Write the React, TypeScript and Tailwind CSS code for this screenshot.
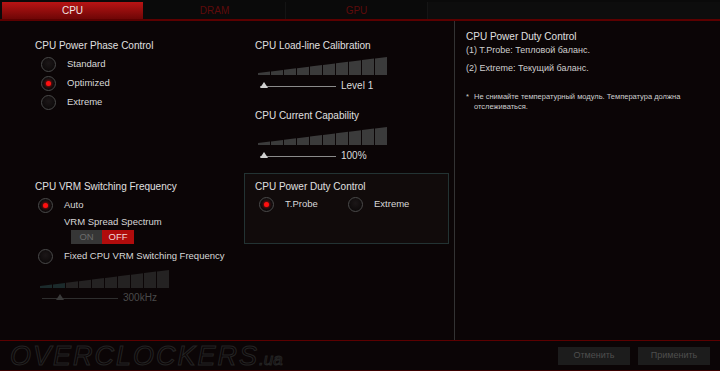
import React from 'react';

const font = "font-['Liberation_Sans',Arial,sans-serif]";

function Radio({ on }: { on?: boolean }) {
    return (
        <span className="flex h-[15px] w-[15px] shrink-0 items-center justify-center rounded-full border border-[#4a4a4a] bg-[radial-gradient(circle_at_50%_40%,#1c1718,#080505)]">
            {on && <span className="h-[5px] w-[5px] rounded-full bg-[#ff1010] shadow-[0_0_3px_#ff0000]" />}
        </span>
    );
}

function Bars({ faded }: { faded?: boolean }) {
    const cols = Array.from({ length: 10 }, (_, i) => i);
    const w = 129;
    const h = 18;
    const top = (x: number) => h - (2 + (x / w) * 16);
    return (
        <svg width={w} height={h} viewBox={`0 0 ${w} ${h}`} className="block">
            {cols.map((i) => {
                const x0 = i * 13;
                const x1 = x0 + 12;
                const fill = faded ? (i < 2 ? '#1b2a2b' : '#242222') : '#3b3b3b';
                return (
                    <polygon
                        key={i}
                        points={`${x0},${h} ${x0},${top(x0)} ${x1},${top(x1)} ${x1},${h}`}
                        fill={fill}
                    />
                );
            })}
        </svg>
    );
}

function Slider({ label, faded }: { label: string; faded?: boolean }) {
    return (
        <div className="flex h-[15px] items-center">
            <div className="relative h-[8px] w-[80px]">
                <div className={`absolute left-[2px] right-[2px] top-[4px] h-px ${faded ? 'bg-[#2e2e2e]' : 'bg-[#8a8a8a]'}`} />
                <svg className={`absolute top-0 ${faded ? 'left-[16px]' : 'left-[2px]'}`} width="8" height="6" viewBox="0 0 8 6">
                    <polygon points="4,0 8,6 0,6" fill={faded ? '#3a3a3a' : '#d0d0d0'} />
                </svg>
            </div>
            <span className={`ml-[3px] text-[10px] ${faded ? 'text-[#4a4a4a]' : 'text-[#dcdcdc]'}`}>{label}</span>
        </div>
    );
}

function Option({ on, label }: { on?: boolean; label: string }) {
    return (
        <div className="flex h-[19px] items-center">
            <Radio on={on} />
            <span className="ml-[11px] text-[9.5px] text-[#d8d8d8]">{label}</span>
        </div>
    );
}

export default function App() {
    return (
        <div className={`flex h-[371px] w-[720px] flex-col overflow-hidden bg-[#0b0506] ${font}`}>
            {/* tabs */}
            <div className="flex h-[19px] shrink-0 bg-[#0a0a0a] pt-[2px]">
                <div className="ml-[2px] flex w-[141px] items-center justify-center bg-[linear-gradient(#b81414,#6e0606)] text-[10px] text-[#f0e6e6]">CPU</div>
                <div className="ml-px flex w-[142px] items-center justify-center border-r border-[#141414] text-[10px] text-[#5e0b0b]">DRAM</div>
                <div className="flex w-[142px] items-center justify-center border-r border-[#151515] text-[10px] text-[#5e0b0b]">GPU</div>
                <div className="flex-1 bg-[#0d0d0d]" />
            </div>
            <div className="h-[2px] shrink-0 bg-[#5c0000]" />

            {/* main */}
            <div className="flex flex-1">
                <div className="flex w-[455px] border-r border-[#333]">
                    {/* column A */}
                    <div className="flex w-[244px] flex-col pl-[35px] pt-[17px]">
                        <div className="h-[15px] text-[10px] text-[#e0e0e0]">CPU Power Phase Control</div>
                        <div className="ml-[6px] mt-[2px] flex flex-col">
                            <Option label="Standard" />
                            <Option on label="Optimized" />
                            <Option label="Extreme" />
                        </div>

                        <div className="mt-[67px] h-[15px] text-[10px] text-[#e0e0e0]">CPU VRM Switching Frequency</div>
                        <div className="ml-[3px] mt-[2px] flex h-[19px] items-center">
                            <Radio on />
                            <span className="ml-[11px] text-[9.5px] text-[#d8d8d8]">Auto</span>
                        </div>
                        <div className="ml-[29px] h-[14px] text-[9.5px] leading-[14px] text-[#d8d8d8]">VRM Spread Spectrum</div>
                        <div className="ml-[36px] mt-[1px] flex h-[14px] w-[63px] text-[9.5px]">
                            <div className="flex w-[31px] items-center justify-center bg-[#363636] text-[#6c6c6c]">ON</div>
                            <div className="flex flex-1 items-center justify-center bg-[#b00c0c] text-[#f0dada]">OFF</div>
                        </div>
                        <div className="ml-[3px] mt-[3px] flex h-[19px] items-center">
                            <Radio />
                            <span className="ml-[11px] whitespace-nowrap text-[9.5px] text-[#d8d8d8]">Fixed CPU VRM Switching Frequency</span>
                        </div>
                        <div className="ml-[5px] mt-[4px]">
                            <Bars faded />
                        </div>
                        <div className="ml-[5px] mt-[2px]">
                            <Slider faded label="300kHz" />
                        </div>
                    </div>

                    {/* column B */}
                    <div className="flex flex-1 flex-col pr-[5px] pt-[17px]">
                        <div className="h-[15px] pl-[11px] text-[10px] text-[#e0e0e0]">CPU Load-line Calibration</div>
                        <div className="ml-[14px] mt-[4px]"><Bars /></div>
                        <div className="ml-[14px] mt-[3px]"><Slider label="Level 1" /></div>

                        <div className="mt-[15px] h-[15px] pl-[11px] text-[10px] text-[#e0e0e0]">CPU Current Capability</div>
                        <div className="ml-[14px] mt-[4px]"><Bars /></div>
                        <div className="ml-[14px] mt-[3px]"><Slider label="100%" /></div>

                        <div className="mt-[10px] h-[71px] border border-[#233333] bg-[#110b0b] pl-[10px] pt-[5px]">
                            <div className="h-[15px] text-[10px] text-[#e0e0e0]">CPU Power Duty Control</div>
                            <div className="ml-[4px] mt-px flex h-[19px] items-center">
                                <Radio on />
                                <span className="ml-[11px] w-[63px] text-[9.5px] text-[#d8d8d8]">T.Probe</span>
                                <Radio />
                                <span className="ml-[11px] text-[9.5px] text-[#d8d8d8]">Extreme</span>
                            </div>
                        </div>
                    </div>
                </div>

                {/* right panel */}
                <div className="flex-1 pl-[11px] pt-[8px]">
                    <div className="h-[15px] text-[10px] text-[#e0e0e0]">CPU Power Duty Control</div>
                    <div className="text-[9px] leading-[13px] text-[#cfcfcf]">(1) T.Probe: Тепловой баланс.</div>
                    <div className="mt-[5px] text-[9px] leading-[13px] text-[#cfcfcf]">(2) Extreme: Текущий баланс.</div>
                    <div className="mt-[17px] flex text-[7.5px] leading-[10px] text-[#cfcfcf]">
                        <span className="w-[8px] shrink-0">*</span>
                        <span>Не снимайте температурный модуль. Температура должна отслеживаться.</span>
                    </div>
                </div>
            </div>

            {/* footer */}
            <div className="h-px shrink-0 bg-[#5c0000]" />
            <div className="flex h-[29px] shrink-0 items-center">
                <div className="ml-[10px] flex flex-1 items-end italic">
                    <span className="text-[27px] leading-[26px] tracking-[2px] text-transparent [-webkit-text-stroke:1px_#232323]">OVERCLOCKERS</span>
                    <span className="text-[17px] leading-[18px] text-transparent [-webkit-text-stroke:1px_#232323]">.ua</span>
                </div>
                <div className="mr-[10px] flex gap-[8px]">
                    <div className="flex h-[18px] w-[72px] items-center justify-center bg-[#1c1c1c] text-[9px] text-[#4e4e4e]">Отменить</div>
                    <div className="flex h-[18px] w-[72px] items-center justify-center bg-[#1c1c1c] text-[9px] text-[#4e4e4e]">Применить</div>
                </div>
            </div>
            <div className="h-px shrink-0 bg-[#3a0000]" />
        </div>
    );
}
